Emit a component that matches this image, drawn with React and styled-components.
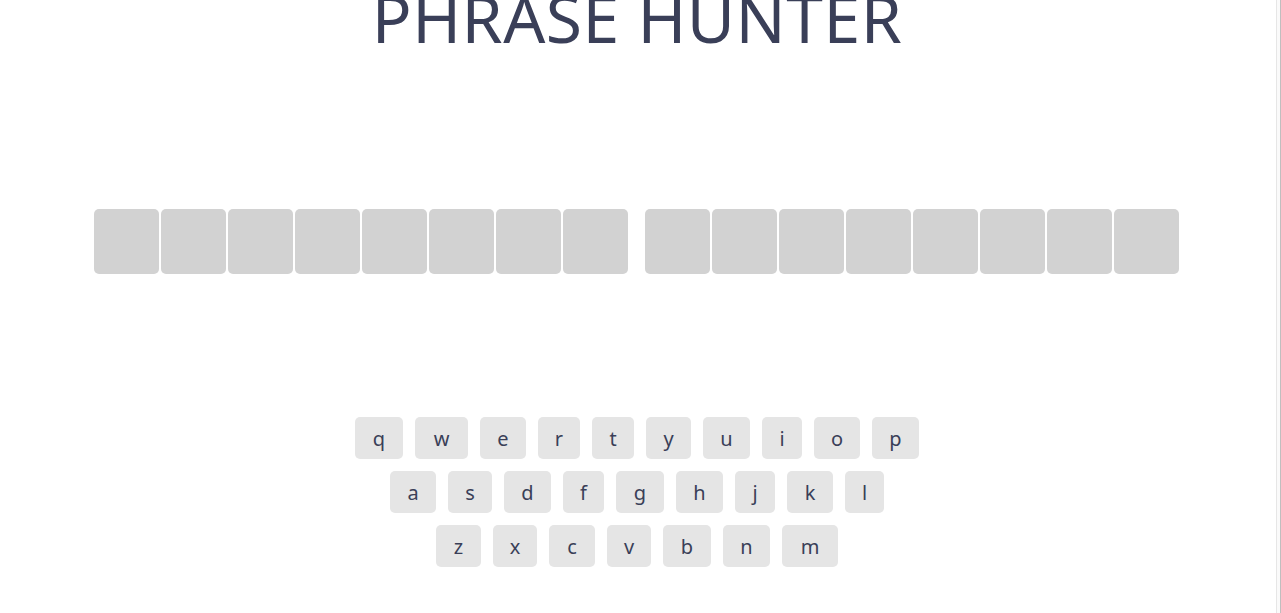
import React from "react";
import styled, { createGlobalStyle } from "styled-components";

const GlobalStyle = createGlobalStyle`
  html, body {
    margin: 0;
    padding: 0;
    background: #ffffff;
    overflow: hidden;
  }
  body {
    font-family: "Noto Sans", "Open Sans", sans-serif;
    color: #3a3f58;
  }
`;

const Page = styled.div`
  display: flex;
  height: 100vh;
`;

const Main = styled.main`
  flex: 1;
  display: flex;
  flex-direction: column;
  align-items: center;
  padding-right: 2px;
`;

const ScrollTrack = styled.div`
  width: 3px;
  border-left: 1px solid #e6e6e6;
  border-right: 1px solid #bfbfbf;
  background: #fafafa;
`;

const Title = styled.h2`
  margin: -16px 0 0;
  font-size: 66px;
  line-height: 1;
  font-weight: 400;
  letter-spacing: 0.5px;
  text-transform: uppercase;
  color: #3a3f58;
`;

const Phrase = styled.ul`
  display: flex;
  list-style: none;
  margin: 159px 0 0;
  padding: 0;
`;

const Letter = styled.li`
  width: 65px;
  height: 65px;
  margin-right: 2px;
  border-radius: 5px;
  background: #d2d2d2;
`;

const Space = styled.li`
  width: 15px;
`;

const Keyboard = styled.div`
  display: flex;
  flex-direction: column;
  align-items: center;
  gap: 12px;
  margin-top: 143px;
`;

const KeyRow = styled.div`
  display: flex;
  gap: 12px;
`;

const Key = styled.button`
  width: ${(props) => props.$w}px;
  height: 42px;
  padding: 0;
  border: none;
  border-radius: 5px;
  background: #e5e5e5;
  font-family: "Noto Sans", "Open Sans", sans-serif;
  font-size: 20px;
  color: #3a3f58;
  display: flex;
  align-items: center;
  justify-content: center;
  cursor: pointer;
`;

const words = [8, 8];

const rows = [
  [["q", 48], ["w", 53], ["e", 46], ["r", 42], ["t", 42], ["y", 45], ["u", 47], ["i", 40], ["o", 46], ["p", 47]],
  [["a", 46], ["s", 44], ["d", 47], ["f", 41], ["g", 48], ["h", 47], ["j", 40], ["k", 46], ["l", 39]],
  [["z", 45], ["x", 44], ["c", 46], ["v", 44], ["b", 48], ["n", 47], ["m", 56]],
];

export default function App() {
  return (
    <>
      <GlobalStyle />
      <Page>
        <Main>
          <Title>Phrase Hunter</Title>

          <Phrase>
            {words.map((len, wi) => (
              <React.Fragment key={wi}>
                {wi > 0 && <Space />}
                {Array.from({ length: len }).map((_, i) => (
                  <Letter key={i} />
                ))}
              </React.Fragment>
            ))}
          </Phrase>

          <Keyboard>
            {rows.map((row, ri) => (
              <KeyRow key={ri}>
                {row.map(([ch, w]) => (
                  <Key key={ch} $w={w}>
                    {ch}
                  </Key>
                ))}
              </KeyRow>
            ))}
          </Keyboard>
        </Main>
        <ScrollTrack />
      </Page>
    </>
  );
}
